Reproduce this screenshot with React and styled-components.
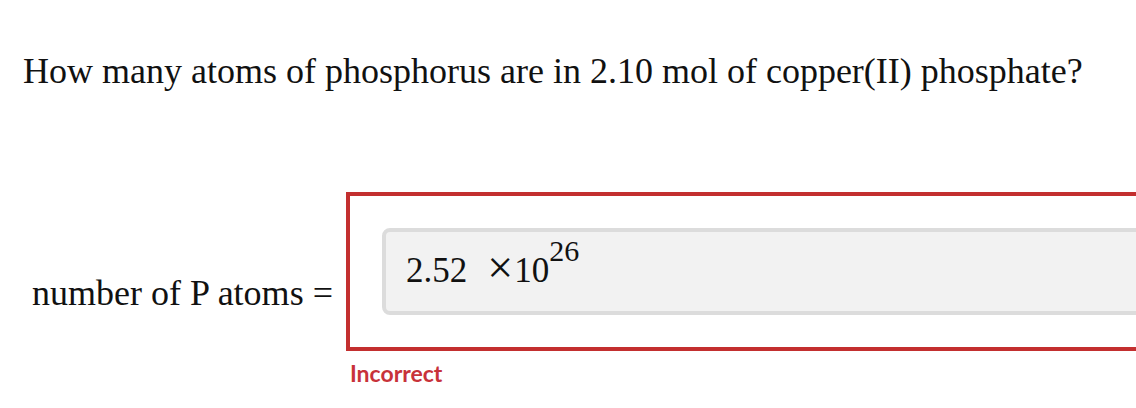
import { styled, createGlobalStyle } from 'styled-components';

const GlobalStyle = createGlobalStyle`
  body {
    margin: 0;
    background: #ffffff;
    overflow: hidden;
  }
`

const Page = styled.div`
  width: 1136px;
  height: 408px;
  padding-left: 23px;
  box-sizing: border-box;
  overflow: hidden;
  font-family: "Liberation Serif", "Times New Roman", serif;
  color: #111111;
`

const Question = styled.p`
  margin: 0;
  padding-top: 50px;
  font-size: 36px;
  line-height: 42px;
  white-space: nowrap;
`

const AnswerRow = styled.div`
  display: flex;
  align-items: flex-start;
  margin-top: 100px;
  margin-right: -80px;
`

const Label = styled.div`
  padding-left: 9px;
  margin-top: 80px;
  margin-right: 13px;
  font-size: 36px;
  line-height: 42px;
  white-space: nowrap;
`

const AnswerColumn = styled.div`
  display: flex;
  flex-direction: column;
  flex: 1;
`

const ResultBox = styled.div`
  border: 4px solid ${({ $wrong }) => $wrong ? '#c32f2f' : '#3a8a3a'};
  padding: 32px;
`

const Field = styled.div`
  height: 79px;
  box-sizing: content-box;
  background: #f2f2f2;
  border: 4px solid #dcdcdc;
  border-radius: 8px;
  padding: 0 20px;
`

const Value = styled.div`
  padding-top: 19px;
  font-size: 35px;
  line-height: 40px;
  white-space: nowrap;
`

const Times = styled.span`
  margin-left: 20px;
  margin-right: 1px;
  font-size: 46px;
  line-height: 0;
  vertical-align: -1px;
`

const Exponent = styled.sup`
  font-size: 30px;
  line-height: 0;
  vertical-align: 21px;
`

const Feedback = styled.div`
  margin-top: 8px;
  margin-left: 4px;
  font-family: Lato, "Liberation Sans", sans-serif;
  font-weight: 700;
  font-size: 23px;
  color: #c8323a;
`

const App = () => {
  return (
    <Page>
      <GlobalStyle />
      <Question>How many atoms of phosphorus are in 2.10 mol of copper(II) phosphate?</Question>
      <AnswerRow>
        <Label>number of P atoms =</Label>
        <AnswerColumn>
          <ResultBox $wrong>
            <Field>
              <Value>
                2.52<Times>×</Times>10<Exponent>26</Exponent>
              </Value>
            </Field>
          </ResultBox>
          <Feedback>Incorrect</Feedback>
        </AnswerColumn>
      </AnswerRow>
    </Page>
  );
}

export default App;
